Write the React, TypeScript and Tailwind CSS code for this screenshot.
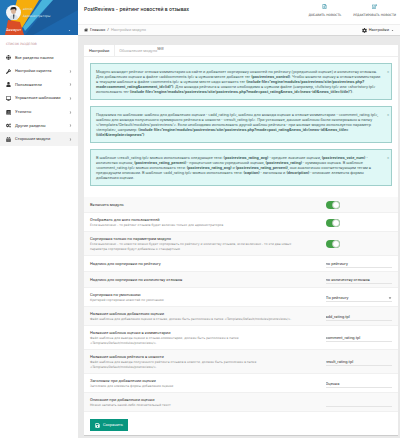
import React from 'react';
import { FaGlobe, FaWrench, FaUser, FaDesktop, FaBook, FaCogs, FaCalendarAlt, FaHome, FaCog, FaRegFileAlt, FaRegEdit, FaSave, FaChevronRight, FaCaretDown } from 'react-icons/fa';

const menu = [
  { icon: <FaGlobe />, label: 'Все разделы панели' },
  { icon: <FaWrench />, label: 'Настройки скрипта', more: true },
  { icon: <FaUser />, label: 'Пользователи', more: true },
  { icon: <FaDesktop />, label: 'Управление шаблонами', more: true },
  { icon: <FaBook />, label: 'Утилиты', more: true },
  { icon: <FaCogs />, label: 'Другие разделы', more: true },
  { icon: <FaCalendarAlt />, label: 'Сторонние модули', more: true, active: true },
];

type Row = {
  id: string;
  title: string;
  desc?: string;
  type: 'switch' | 'text' | 'select';
  value?: string;
};

const rows: Row[] = [
  { id: 'enabled', title: 'Включить модуль', type: 'switch' },
  {
    id: 'show_all',
    title: 'Отображать для всех пользователей',
    desc: 'Если выключено - то рейтинг отзывов будет включен только для администраторов',
    type: 'switch',
  },
  {
    id: 'only_params',
    title: 'Сортировка только по параметрам модуля',
    desc: 'Если выключено - то новости можно будет сортировать по рейтингу и количеству отзывов, если включено - то эти два новых параметра сортировки будут добавлены к стандартным',
    type: 'switch',
  },
  { id: 'label_rating', title: 'Надпись для сортировки по рейтингу', type: 'text', value: 'по рейтингу' },
  { id: 'label_count', title: 'Надпись для сортировки по количеству отзывов', type: 'text', value: 'по количеству отзывов' },
  {
    id: 'sort_default',
    title: 'Сортировка по умолчанию',
    desc: 'Критерий сортировки новостей по умолчанию',
    type: 'select',
    value: 'По рейтингу',
  },
  {
    id: 'tpl_add',
    title: 'Название шаблона добавления оценки',
    desc: 'Файл шаблона для добавления оценки в отзыве, должен быть расположен в папке <Templates/Default/modules/postreviews/>.',
    type: 'text',
    value: 'add_rating.tpl',
  },
  {
    id: 'tpl_comment',
    title: 'Название шаблона оценки в комментарии',
    desc: 'Файл шаблона для вывода оценки в отзыве-комментарии, должен быть расположен в папке <Templates/Default/modules/postreviews/>.',
    type: 'text',
    value: 'comment_rating.tpl',
  },
  {
    id: 'tpl_result',
    title: 'Название шаблона рейтинга в новости',
    desc: 'Файл шаблона для вывода полученного рейтинга отзывов в новости, должен быть расположен в папке <Templates/Default/modules/postreviews/>.',
    type: 'text',
    value: 'result_rating.tpl',
  },
  {
    id: 'caption',
    title: 'Заголовок при добавлении оценки',
    desc: 'Заголовок для элемента формы добавления оценки',
    type: 'text',
    value: 'Оценка',
  },
  {
    id: 'description',
    title: 'Описание при добавлении оценки',
    desc: 'Можно написать какой-либо пояснительный текст',
    type: 'text',
    value: '',
  },
];

function Alert({ children }: { children: React.ReactNode }) {
  return (
    <div className="flex min-h-[37px] items-start border border-[#9fcfcb] bg-[#dff8f6] py-[5px] pl-[5px] text-[4px] leading-[5px] text-[#4a6463]">
      <p className="min-w-0 flex-1 whitespace-nowrap">{children}</p>
      <button type="button" aria-label="Закрыть" className="w-[6px] text-center text-[#8fb5b2]">×</button>
    </div>
  );
}

function Control({ row }: { row: Row }) {
  if (row.type === 'switch') {
    return (
      <input
        id={row.id}
        type="checkbox"
        role="switch"
        defaultChecked
        className="block h-2 w-[14px] appearance-none rounded-full bg-[#dddddd] before:ml-auto before:block before:size-2 before:rounded-full before:border before:border-[#b5c9b6] before:bg-white checked:bg-[#43a047]"
      />
    );
  }
  if (row.type === 'select') {
    return (
      <div className="relative">
        <select id={row.id} className="block h-2 w-full appearance-none border-b border-[#e4e4e4] bg-transparent leading-[7px]">
          <option>{row.value}</option>
        </select>
        <FaCaretDown className="pointer-events-none absolute top-[2px] right-0 size-1 text-[#555555]" />
      </div>
    );
  }
  return (
    <input
      id={row.id}
      type="text"
      defaultValue={row.value}
      className="block h-2 w-full border-b border-[#e4e4e4] bg-transparent leading-[7px]"
    />
  );
}

function Sidebar() {
  return (
    <aside className="w-[78px] shrink-0 bg-white">
      <div className="relative h-[35px] overflow-hidden bg-[#1c62a5] text-white">
        <svg viewBox="0 0 78 35" preserveAspectRatio="none" className="absolute inset-0 size-full">
          <rect width="78" height="35" fill="#1d67ad" />
          <path d="M0 0H17L7 35H0Z" fill="#2277b9" />
          <path d="M53 0H78V10L33 35H25Z" fill="#1b5c9c" />
          <path d="M42 0H53L25 31L23 27Z" fill="#48b4dc" />
          <path d="M17 0H39L22 28L11 21Z" fill="#f6ad0c" />
          <path d="M8 20L20 22L24 35H5Z" fill="#da4d26" />
        </svg>
        <div className="relative flex h-[25px] items-center gap-[2px] pl-[6px]">
          <svg viewBox="0 0 30 30" className="size-[15px]">
            <circle cx="15" cy="15" r="15" fill="#f4f6f7" />
            <path d="M7 28C7 21 11 19 15 19S24 21 24 28A15 15 0 0 1 7 28Z" fill="#dce3e8" />
            <ellipse cx="15" cy="12" rx="5" ry="6" fill="#d9b59b" />
            <path d="M9 11C8 5 12 3 16 4C21 4 22 8 20 12L18 8L11 9Z" fill="#292525" />
            <path d="M14 19H17L16 28H15Z" fill="#303b47" />
          </svg>
          <div className="font-['DejaVu_Sans',sans-serif] text-[3px] leading-[7px] text-[#d5e4f1]">
            <div>admin</div>
            <div>Администраторы</div>
          </div>
        </div>
        <button type="button" className="relative flex h-[10px] w-full items-center justify-between pr-[7px] pl-[6px] text-[4px]">
          Аккаунт
          <FaCaretDown className="size-[3px]" />
        </button>
      </div>
      <div className="flex h-4 items-center px-[6px] pt-[3px] font-['DejaVu_Sans',sans-serif] text-[3px] text-[#bd8a90]">СПИСОК РАЗДЕЛОВ</div>
      <nav className="grid h-[95px] grid-rows-7 text-[4px] text-[#333333]">
        {menu.map((item) => (
          <a
            key={item.label}
            href="#"
            className={`flex items-center gap-1 pr-[6px] pl-[6px] ${item.active ? 'bg-[#f3f3f3]' : ''}`}
          >
            <span className="text-[5px]">{item.icon}</span>
            <span className="flex-1 whitespace-nowrap">{item.label}</span>
            {item.more && <FaChevronRight className="size-[3px] text-[#666666]" />}
          </a>
        ))}
      </nav>
    </aside>
  );
}

function Header() {
  return (
    <header className="border-b border-[#d6d6d6] bg-white">
      <div className="flex h-6 items-center justify-between pr-1 pl-[6px]">
        <h1 className="pb-1 font-['Inter','Open_Sans',sans-serif] text-[5px] font-medium whitespace-nowrap text-[#222222]">PostReviews - рейтинг новостей в отзывах</h1>
        <div className="flex gap-3 pb-[2px] font-['DejaVu_Sans',sans-serif] text-[3px] leading-[8px] whitespace-nowrap text-[#444444]">
          <a href="#" className="flex flex-col items-center gap-[2px]">
            <FaRegFileAlt className="size-[5px] text-[#23879f]" />
            ДОБАВИТЬ НОВОСТЬ
          </a>
          <a href="#" className="flex flex-col items-center gap-[2px]">
            <FaRegEdit className="size-[5px] text-[#23879f]" />
            РЕДАКТИРОВАТЬ НОВОСТИ
          </a>
        </div>
      </div>
      <div className="flex h-[11px] items-center justify-between border-t border-[#eeeeee] bg-[#fcfcfc] pr-[6px] pl-[6px] text-[4px] text-[#333333]">
        <div className="flex items-center gap-[2px]">
          <FaHome className="size-1" />
          <a href="#">Главная</a>
          <span>/</span>
          <span className="text-[#aaaaaa]">Настройки модуля</span>
        </div>
        <button type="button" className="flex items-center gap-[2px]">
          <FaCog className="size-[5px]" />
          Настройки
          <FaCaretDown className="size-[3px]" />
        </button>
      </div>
    </header>
  );
}

export default function App() {
  return (
    <div className="flex min-h-screen bg-[#e9e9e9] font-['Roboto','Liberation_Sans',sans-serif]">
      <Sidebar />
      <div className="min-w-0 flex-1">
        <Header />
        <main className="pt-[9px] pr-[2px] pb-[2px] pl-[6px]">
          <div className="border-b border-[#cccccc] bg-white">
            <div className="flex h-3 border-b border-[#eeeeee] text-[4px]">
              <button type="button" className="border-r border-[#eeeeee] px-[5px] text-[#333333]">Настройки</button>
              <button type="button" className="flex items-center px-1 text-[#aaaaaa]">
                Обновление модуля
                <span className="pb-[2px] text-[3px] text-[#666666]">NEW</span>
              </button>
            </div>
            <div className="flex flex-col gap-[6px] px-[6px] pt-[6px] pb-[11px]">
              <Alert>
                Модуль выводит рейтинг отзыва-комментария на сайте и добавляет сортировку новостей по рейтингу (усредненной оценке) и количеству отзывов.
                <br />
                Для добавления оценки в файле &lt;addcomments.tpl&gt; в нужном месте добавьте тег <b>{'{postreviews_control}'}</b>. Чтобы вывести оценку в отзыве-комментарии
                <br />
                в текущем шаблоне в файле &lt;comments.tpl&gt; в нужном месте надо вставить тег <b>{'{include file="engine/modules/postreviews/site/postreviews.php?'}</b>
                <br />
                <b>{'mode=comment_rating&comment_id={id}"}'}</b>. Для вывода рейтинга в новости необходимо в нужном файле (например, &lt;fullstory.tpl&gt; или &lt;shortstory.tpl&gt;
                <br />
                использовать тег <b>{'{include file="engine/modules/postreviews/site/postreviews.php?mode=post_rating&news_id={news-id}&news_title={title}"}'}</b>.
              </Alert>
              <Alert>
                Подсказка по шаблонам: шаблон для добавления оценки - &lt;add_rating.tpl&gt;, шаблон для вывода оценки в отзыве-комментарии - &lt;comment_rating.tpl&gt;,
                <br />
                шаблон для вывода полученного суммарного рейтинга в новости - &lt;result_rating.tpl&gt;. При установке, данные шаблоны были скопированы в папку
                <br />
                &lt;/templates/Default/modules/postreviews/&gt;. Если необходимо использовать другой шаблон рейтинга - при вызове модуля используется параметр
                <br />
                &lt;template&gt;, например: <b>{'{include file="engine/modules/postreviews/site/postreviews.php?mode=post_rating&news_id={news-id}&news_title='}</b>
                <br />
                <b>{'{title}&template=topnews"}'}</b>
              </Alert>
              <Alert>
                В шаблоне &lt;result_rating.tpl&gt; можно использовать следующие теги: <b>{'{postreviews_rating_avg}'}</b> - среднее значение оценки, <b>{'{postreviews_vote_num}'}</b> -
                <br />
                количество оценок, <b>{'{postreviews_rating_percent}'}</b> - процентное число усредненной оценки, <b>{'{postreviews_rating}'}</b> - суммарная оценка. В шаблоне
                <br />
                &lt;comment_rating.tpl&gt; можно использовать теги: <b>{'{postreviews_rating_avg}'}</b> и <b>{'{postreviews_rating_percent}'}</b>, они аналогичны соответствующим тегам в
                <br />
                предыдущем описании. В шаблоне &lt;add_rating.tpl&gt; можно использовать теги: <b>{'{caption}'}</b> - заголовок и <b>{'{description}'}</b> - описание элемента формы
                <br />
                добавления оценки.
              </Alert>
            </div>
            <form>
              {rows.map((row) => (
                <div
                  key={row.id}
                  className="flex min-h-4 items-center border-b border-[#f0f0f0] px-[6px] pt-1 pb-[3px] text-[4px] text-[#333333] odd:bg-[#f9f9f9]"
                >
                  <div className="min-w-0 flex-1 pr-5">
                    <label htmlFor={row.id} className="block leading-[6px]">{row.title}</label>
                    {row.desc && (
                      <p className="font-['DejaVu_Sans',sans-serif] text-[3px] leading-[5px] text-[#888888]">{row.desc}</p>
                    )}
                  </div>
                  <div className="w-[22%]">
                    <Control row={row} />
                  </div>
                </div>
              ))}
              <div className="px-[6px] pt-[7px] pb-1">
                <button type="button" className="flex h-3 items-center gap-[3px] bg-[#07967f] px-[5px] text-[4px] text-white">
                  <FaSave className="size-[5px]" />
                  Сохранить
                </button>
              </div>
            </form>
          </div>
        </main>
      </div>
    </div>
  );
}
